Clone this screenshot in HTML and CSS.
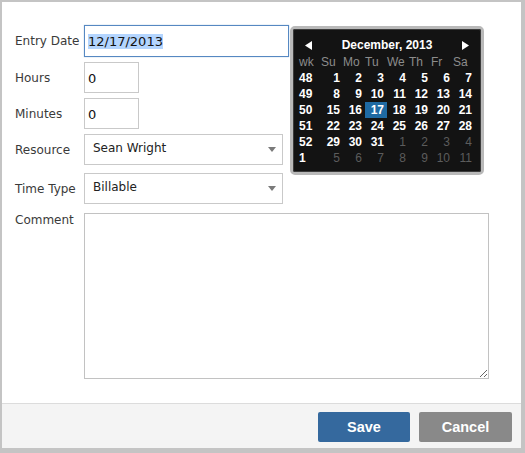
FILE: index.html
```html
<!DOCTYPE html>
<html>
<head>
<meta charset="utf-8">
<link rel="stylesheet" href="styles.css">
</head>
<body>
<div class="dialog">
  <div class="form">
    <div class="row r-entry">
      <div class="label">Entry Date</div>
      <div class="input entry focused"><span class="sel">12/17/2013</span></div>
    </div>
    <div class="row">
      <div class="label">Hours</div>
      <div class="input small">0</div>
    </div>
    <div class="row">
      <div class="label">Minutes</div>
      <div class="input small">0</div>
    </div>
    <div class="row r-resource">
      <div class="label">Resource</div>
      <div class="select"><span>Sean Wright</span><svg class="caret" width="8" height="5" viewBox="0 0 8 5"><path d="M0 0H8L4 5Z" fill="#7a7a7a"/></svg></div>
    </div>
    <div class="row r-type">
      <div class="label">Time Type</div>
      <div class="select"><span>Billable</span><svg class="caret" width="8" height="5" viewBox="0 0 8 5"><path d="M0 0H8L4 5Z" fill="#7a7a7a"/></svg></div>
    </div>
    <div class="row r-comment">
      <div class="label">Comment</div>
      <textarea class="comment"></textarea>
    </div>
  </div>
  <div class="footer">
    <button class="btn save">Save</button>
    <button class="btn cancel">Cancel</button>
  </div>

  <div class="calendar">
    <div class="cal-inner">
      <div class="cal-title">
        <svg width="7" height="9" viewBox="0 0 7 9"><path d="M7 0V9L0 4.5Z" fill="#fff"/></svg>
        <span>December, 2013</span>
        <svg width="7" height="9" viewBox="0 0 7 9"><path d="M0 0V9L7 4.5Z" fill="#fff"/></svg>
      </div>
      <div class="cal-grid">
        <div class="wk name">wk</div><div class="name">Su</div><div class="name">Mo</div><div class="name">Tu</div><div class="name">We</div><div class="name">Th</div><div class="name">Fr</div><div class="name">Sa</div>
        <div class="wk">48</div><div class="d">1</div><div class="d">2</div><div class="d">3</div><div class="d">4</div><div class="d">5</div><div class="d">6</div><div class="d">7</div>
        <div class="wk">49</div><div class="d">8</div><div class="d">9</div><div class="d">10</div><div class="d">11</div><div class="d">12</div><div class="d">13</div><div class="d">14</div>
        <div class="wk">50</div><div class="d">15</div><div class="d">16</div><div class="d today">17</div><div class="d">18</div><div class="d">19</div><div class="d">20</div><div class="d">21</div>
        <div class="wk">51</div><div class="d">22</div><div class="d">23</div><div class="d">24</div><div class="d">25</div><div class="d">26</div><div class="d">27</div><div class="d">28</div>
        <div class="wk">52</div><div class="d">29</div><div class="d">30</div><div class="d">31</div><div class="d other">1</div><div class="d other">2</div><div class="d other">3</div><div class="d other">4</div>
        <div class="wk">1</div><div class="d other">5</div><div class="d other">6</div><div class="d other">7</div><div class="d other">8</div><div class="d other">9</div><div class="d other">10</div><div class="d other">11</div>
      </div>
    </div>
  </div>
</div>
</body>
</html>
```

FILE: styles.css
```css
html, body {
  margin: 0;
  padding: 0;
  background: #c4c4c4;
  width: 525px;
  height: 453px;
  overflow: hidden;
}

.dialog {
  position: relative;
  margin: 2px 4px 0 2px;
  width: 519px;
  height: 446px;
  background: #fff;
  display: flex;
  flex-direction: column;
  font-family: "DejaVu Sans", Verdana, sans-serif;
}

.form {
  flex: 1;
  padding: 23px 0 0 13px;
}

.row {
  display: flex;
  align-items: center;
  margin-bottom: 5px;
}

.r-resource { margin-bottom: 8px; }
.r-type { margin-bottom: 9px; }
.r-comment { align-items: flex-start; margin-bottom: 0; }

.label {
  width: 69px;
  flex: none;
  font-size: 12px;
  line-height: 14px;
  color: #3a3a3a;
}

.r-comment .label { margin-top: 0; }

.input {
  box-sizing: border-box;
  border: 1px solid #c9c9c9;
  background: #fff;
  font-size: 13px;
  color: #111;
  padding-left: 3px;
  display: flex;
  align-items: center;
}

.entry {
  width: 205px;
  height: 32px;
}

.focused {
  border-color: #5688c2;
  box-shadow: 0 0 1px rgba(86, 136, 194, 0.6);
}

.sel {
  background: #b4d5fe;
  line-height: 14px;
  padding-top: 1px;
  margin-top: 1px;
}

.small {
  width: 55px;
  height: 31px;
  padding-top: 2px;
}

.select {
  box-sizing: border-box;
  width: 199px;
  height: 31px;
  border: 1px solid #c9c9c9;
  background: #fff;
  display: flex;
  align-items: center;
  justify-content: space-between;
  padding: 0 6px 0 8px;
  font-size: 12px;
  color: #222;
}

.select span { margin-top: -3px; }
.caret { margin-top: 0; }

.comment {
  box-sizing: border-box;
  width: 405px;
  height: 166px;
  border: 1px solid #c2c2c2;
  margin: 0;
  padding: 2px;
  resize: both;
  font-family: inherit;
}

.footer {
  height: 45px;
  box-sizing: border-box;
  border-top: 1px solid #dcdcdc;
  background: #f4f4f4;
  display: flex;
  justify-content: flex-end;
  align-items: flex-start;
  gap: 9px;
  padding: 8px 9px 0 0;
}

.btn {
  height: 30px;
  border: none;
  border-radius: 2px;
  color: #fff;
  font-family: "Liberation Sans", Arial, sans-serif;
  font-weight: bold;
  font-size: 14.5px;
  padding: 0;
  margin: 0;
}

.save { width: 92px; background: #35699e; }
.cancel { width: 93px; background: #898989; }

/* calendar popup */
.calendar {
  position: absolute;
  left: 288px;
  top: 24px;
  width: 194px;
  height: 149px;
  box-sizing: border-box;
  border: 3px solid #b9b9b9;
  border-radius: 5px;
  background: #131313;
  font-family: "Liberation Sans", Arial, sans-serif;
}

.cal-inner {
  box-sizing: border-box;
  height: 100%;
  border-radius: 2px;
  box-shadow: inset 0 0 0 1px #3c3c3c;
  padding: 7px 6px 6px 3px;
}

.cal-title {
  height: 18px;
  display: flex;
  align-items: center;
  justify-content: space-between;
  padding: 0 6px 0 9px;
  color: #fff;
  font-weight: bold;
  font-size: 12px;
}

.cal-grid {
  display: grid;
  grid-template-columns: 25px repeat(7, 22px);
  grid-auto-rows: 16px;
  font-size: 12px;
  line-height: 16px;
}

.cal-grid > div {
  text-align: right;
  padding-right: 3px;
  color: #fff;
  font-weight: bold;
}

.cal-grid > .wk {
  text-align: left;
  padding: 0 0 0 3px;
}

.cal-grid > .name {
  text-align: left;
  padding: 0;
  font-weight: normal;
  color: #8c8c8c;
}

.cal-grid > .wk.name { padding-left: 3px; }

.cal-grid > .other {
  color: #5c5c5c;
  font-weight: normal;
}

.cal-grid > .today {
  background: #1f6aa3;
}
```
